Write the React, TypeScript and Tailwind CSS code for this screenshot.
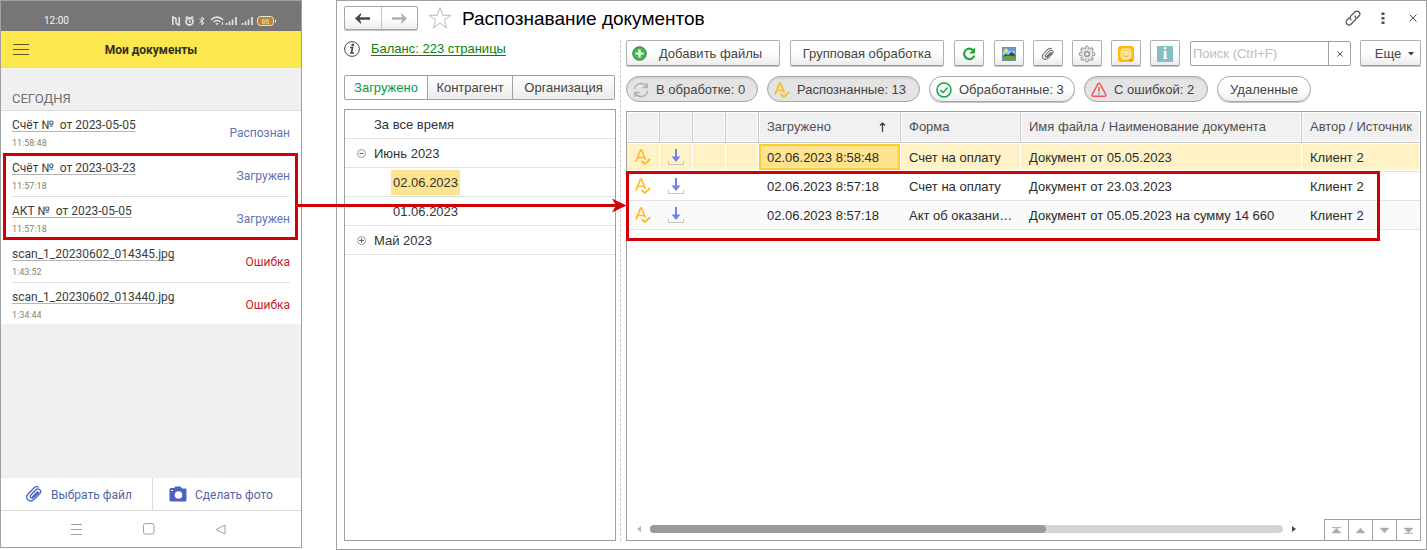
import type { ReactNode } from 'react';
import clsx from 'clsx';

const scans = [
  { title: 'Счёт №\u00a0 от 2023-05-05', time: '11:58:48', status: 'Распознан' },
  { title: 'Счёт №\u00a0 от 2023-03-23', time: '11:57:18', status: 'Загружен' },
  { title: 'АКТ №\u00a0 от 2023-05-05', time: '11:57:18', status: 'Загружен' },
  { title: 'scan_1_20230602_014345.jpg', time: '1:43:52', status: 'Ошибка' },
  { title: 'scan_1_20230602_013440.jpg', time: '1:34:44', status: 'Ошибка' },
];

const documents = [
  { date: '02.06.2023 8:58:48', form: 'Счет на оплату', name: 'Документ от 05.05.2023', author: 'Клиент 2' },
  { date: '02.06.2023 8:57:18', form: 'Счет на оплату', name: 'Документ от 23.03.2023', author: 'Клиент 2' },
  { date: '02.06.2023 8:57:18', form: 'Акт об оказани…', name: 'Документ от 05.05.2023 на сумму 14 660', author: 'Клиент 2' },
];

/* ---------- Icons ---------- */

function StatusIcons() {
  return (
    <svg width="106" height="12" viewBox="0 0 106 12" fill="none" stroke="#e4e4e4">
      {/* nfc */}
      <path d="M1.800 10V2L5 3.500V8.500M8.200 2V10L5 8.500" strokeWidth="1.500" />
      {/* alarm */}
      <circle cx="18.500" cy="6.500" r="3.500" strokeWidth="1.800" />
      <path d="M14.500 3 16.500 1.300M22.500 3 20.500 1.300M18.500 4.500V7H20" strokeWidth="1.200" />
      {/* bluetooth */}
      <path d="M28.500 4 33 8 31 10V2L33 4 28.500 8" />
      {/* wifi */}
      <path d="M40 4.800Q46 -.5 52 4.800M42.500 7Q46 4 49.500 7M45 9.300Q46 8.300 47 9.300" strokeWidth="1.600" />
      <path d="M51.500 7V10" />
      {/* signal */}
      <path d="M55.500 10V8M58.500 10V6.500M61.500 10V4.500M65 10V2M71.500 10V8M74.500 10V6.500M77.500 10V4.500M81 10V2" strokeWidth="1.700" />
      {/* battery */}
      <rect x="86.500" y="1.500" width="16" height="9" rx="3" fill="#b98534" />
      <path d="M104.500 4.500V7.500" />
      <text x="94.500" y="8.700" fontSize="7" fontFamily="Roboto" fill="#f5e6c8" stroke="none" textAnchor="middle">
        86
      </text>
    </svg>
  );
}

function Paperclip({ className, width = 1.5 }: { className: string; width?: number }) {
  return (
    <svg className={className} viewBox="0 0 18 18" fill="none" stroke="currentColor" strokeWidth={width} strokeLinecap="round">
      <path d="M13.500 7.500 8.200 12.800C6.800 14.200 4.200 12 5.700 10.300L11 4.800C13.300 2.500 17.300 5.600 14.800 8.500L8.700 14.700C5 18 -.7 13.500 2.800 9.300L9.200 2.800C10.600 1.500 12.200 1.500 13.300 2M7.500 12 12.500 6.800" />
    </svg>
  );
}

function Camera() {
  return (
    <svg width="18" height="16" viewBox="0 0 18 16">
      <path d="M2 2H5L6.500.5H11.500L13 2.500H16.500Q17.500 2.500 17.500 3.500V14Q17.500 15.500 16 15.500H2Q.5 15.500.5 14V4Q.5 2 2 2Z" fill="#4b62bf" />
      <circle cx="9.500" cy="9" r="3.800" fill="#fff" />
      <path d="M2 4.500H4" stroke="#fff" />
    </svg>
  );
}

function Recognized() {
  return (
    <svg width="16" height="16" viewBox="0 0 16 16" fill="none" stroke="#fcbb2c" strokeWidth="1.700">
      <path d="M1 12.500 5.500 1H6.500L10.500 11M2.800 8.500H9.300" />
      <path d="M6.500 12 9.800 15 15.300 10" strokeWidth="1.800" />
    </svg>
  );
}

function Download() {
  return (
    <svg width="16" height="16" viewBox="0 0 16 16" fill="none">
      <path d="M.5 12V15.500H15.500V12" stroke="#c2c2c2" />
      <path d="M8 0V9" stroke="#6f83ea" strokeWidth="2" />
      <path d="M3.500 7.500H12.500L8 13Z" fill="#6f83ea" />
    </svg>
  );
}

function Syncing() {
  return (
    <svg width="16" height="16" viewBox="0 0 16 16" fill="none" stroke="#b0b0b0" strokeWidth="1.500">
      <path d="M1.500 7C2 3.500 5 1.500 8 1.500 10.500 1.500 12.500 2.800 13.800 5M14 1V5.500H9.500M14.500 9C14 12.500 11 14.500 8 14.500 5.500 14.500 3.500 13.200 2.200 11M2 15V10.500H6.500" />
    </svg>
  );
}

function Done() {
  return (
    <svg width="16" height="16" viewBox="0 0 16 16" fill="none" stroke="#14a83c" strokeWidth="1.500">
      <circle cx="8" cy="8" r="7" />
      <path d="M4.500 8 7 10.500 11.500 5.800" />
    </svg>
  );
}

function Warning() {
  return (
    <svg width="16" height="16" viewBox="0 0 16 16" fill="none" stroke="#f4545a" strokeWidth="1.500">
      <path d="M6.700 2.300Q8 .3 9.300 2.300L14.800 12.500Q15.300 14.200 13.500 14.200H2.500Q.7 14.200 1.200 12.500Z" />
      <path d="M8 5V9.500M8 10.800V12.300" />
    </svg>
  );
}

function Plus() {
  return (
    <svg width="15" height="15" viewBox="0 0 15 15">
      <circle cx="7.500" cy="7.500" r="6.800" fill="#45b649" stroke="#1f8e2c" />
      <path d="M7.500 3.500V11.500M3.500 7.500H11.500" stroke="#fff" strokeWidth="2.200" />
    </svg>
  );
}

function Refresh() {
  return (
    <svg width="16" height="16" viewBox="0 0 16 16" fill="none">
      <path d="M11.800 4A5.200 5.200 0 1 0 13.300 9.500" stroke="#22a33a" strokeWidth="2.200" />
      <path d="M14 1.500V7.500H8Z" fill="#22a33a" />
    </svg>
  );
}

function Picture() {
  return (
    <svg width="14" height="14" viewBox="0 0 14 14">
      <rect x=".5" y=".5" width="13" height="13" fill="#a9cbea" stroke="#7d8a9c" />
      <path d="M1 1H13V4H1Z" fill="#6b9dcc" />
      <path d="M1 9 4 6.500 6 8 9.500 4.500 13 7.500V10H1Z" fill="#34506e" />
      <path d="M1 9.500Q7 8 13 9.500V13H1Z" fill="#65a832" />
      <path d="M4 1.500V5M2.300 3.300H5.700" stroke="#ffef3e" strokeWidth="1.500" />
    </svg>
  );
}

function Gear() {
  const teeth = [0, 45, 90, 135, 180, 225, 270, 315];
  return (
    <svg width="18" height="18" viewBox="0 0 18 18" fill="#dfe3e6" stroke="#8a949b">
      {teeth.map((angle) => (
        <circle key={angle} cx="9" cy="2.800" r="1.700" transform={`rotate(${angle} 9 9)`} />
      ))}
      <circle cx="9" cy="9" r="5.600" stroke="none" />
      <circle cx="9" cy="9" r="2.300" fill="#fff" strokeWidth="1.400" />
    </svg>
  );
}

function Robot() {
  return (
    <svg width="16" height="16" viewBox="0 0 16 16">
      <rect width="16" height="16" rx="2.500" fill="#ffb90f" />
      <path d="M4 2.500H12L13.500 5V11L12 13.500H4L2.500 11V5Z" fill="#ffe7a6" />
      <circle cx="8" cy="7.500" r="3.500" fill="none" stroke="#f6c55d" />
      <path d="M6 7.500H7M9 7.500H10M6.500 10H9.500" stroke="#efbd55" />
      <path d="M11 14H14" stroke="#d76c0c" />
    </svg>
  );
}

function Arrow({ left, className }: { left?: boolean; className: string }) {
  return (
    <svg width="15" height="11" viewBox="0 0 15 11" className={className} fill="currentColor">
      {left ? <path d="M0 5.500 6 0V2L4.500 4.300H15V6.700H4.500L6 9V11Z" /> : <path d="M15 5.500 9 0V2L10.500 4.300H0V6.700H10.500L9 9V11Z" />}
    </svg>
  );
}

function Star() {
  return (
    <svg width="24" height="24" viewBox="0 0 24 24" fill="#fff" stroke="#b4bac0">
      <path d="M12 1.500 14.700 9.300H22.800L16.300 14.100 18.800 22 12 17.200 5.200 22 7.700 14.100 1.200 9.300H9.300Z" />
    </svg>
  );
}

function Info() {
  return (
    <svg width="16" height="16" viewBox="0 0 16 16" fill="none" stroke="#4a4a4a">
      <circle cx="8" cy="8" r="7.400" />
      <path d="M6 6.500H8.500L7.500 12M6 12H10" strokeWidth="1.700" />
      <circle cx="8.700" cy="3.900" r="1.300" fill="#4a4a4a" stroke="none" />
    </svg>
  );
}

function Link() {
  return (
    <svg width="16" height="16" viewBox="0 0 16 16" fill="none" stroke="#4f4f4f" strokeWidth="1.200" strokeLinecap="round">
      <path d="M6 9.800C4.800 8.300 5 6.800 6 5.800L9.800 2C11 .8 12.800.8 14 2S15.200 4.800 14 6L12 8" />
      <path d="M10 6.200C11.200 7.700 11 9.200 10 10.200L6.200 14C5 15.200 3.200 15.200 2 14S.8 11.200 2 10L4 8" />
    </svg>
  );
}

function Toggle({ open }: { open: boolean }) {
  return (
    <svg width="9" height="9" viewBox="0 0 9 9" fill="none" stroke="#9a9a9a">
      <circle cx="4.500" cy="4.500" r="4" />
      <path d={open ? 'M2.500 4.500H6.500' : 'M2 4.500H7M4.500 2V7'} stroke="#666" />
    </svg>
  );
}

/* ---------- Phone ---------- */

function Phone() {
  return (
    <section className="flex w-[302px] shrink-0 flex-col border border-[#a0a0a0] font-['Roboto',sans-serif] text-xs">
      <div className="flex h-[30px] items-end justify-between bg-[#767676] pr-6 pb-0.5 pl-[43px] text-[10px] leading-4 text-[#f4f4f4]">
        <span>12:00</span>
        <span className="flex h-4 items-center">
          <StatusIcons />
        </span>
      </div>
      <header className="flex h-[37px] items-center border-b border-[#d8d8d8] bg-[#fde74f] px-3">
        <button aria-label="Меню" className="text-[#5c5426]">
          <svg width="16" height="11" viewBox="0 0 16 11" stroke="currentColor">
            <path d="M0 .5H16M0 5.500H16M0 10.500H16" />
          </svg>
        </button>
        <h2 className="flex-1 pt-0.5 pr-4 text-center font-bold text-[#33301c]">Мои документы</h2>
      </header>
      <h3 className="flex h-[43px] items-end border-b border-[#dcdcdc] bg-[#f0f0f0] px-[11px] pb-px text-[13px] leading-5 text-[#6f6f6f]">
        СЕГОДНЯ
      </h3>

      <div className="relative">
        <ul className="bg-white px-[11px]">
          {scans.map((scan, i) => (
            <li
              key={i}
              className="flex h-[43px] items-center justify-between border-b border-[#e0e0e0] pt-0.5 last:h-[41px] last:border-0"
            >
              <div>
                <a href="#" className="block leading-4 text-[#3c3c3c] underline decoration-[#b5b5b5] underline-offset-2">
                  {scan.title}
                </a>
                <span className="mt-1 block text-[9px] leading-3 text-[#86846a]">{scan.time}</span>
              </div>
              <span className={scan.status === 'Ошибка' ? 'text-[#c9202b]' : 'text-[#5f72b5]'}>{scan.status}</span>
            </li>
          ))}
        </ul>
        <div className="pointer-events-none absolute top-[42px] right-[3px] left-0.5 h-[87px] border-3 border-[#d00005]" />
      </div>

      <div className="flex-1 bg-[#f0f0f0]" />
      <div className="grid h-8 grid-cols-[152px_1fr] text-[#5466a8]">
        <button className="flex items-center gap-2 border-r border-[#dcdcdc] pl-6">
          <Paperclip className="size-[18px] text-[#4b62bf]" width={1.3} />
          <span className="pt-0.5">Выбрать файл</span>
        </button>
        <button className="flex items-center gap-2 pl-4">
          <Camera />
          <span className="pt-0.5">Сделать фото</span>
        </button>
      </div>
      <div className="flex h-[37px] items-center justify-between border-t border-[#dcdcdc] pr-[75px] pl-[70px] text-[#a0a0a0]">
        <svg width="11" height="11" viewBox="0 0 11 11" stroke="currentColor">
          <path d="M0 .5H11M0 5.500H11M0 10.500H11" />
        </svg>
        <svg width="12" height="12" viewBox="0 0 12 12" fill="none" stroke="currentColor">
          <rect x=".5" y=".5" width="10.500" height="10.500" rx="2" />
        </svg>
        <svg width="11" height="11" viewBox="0 0 11 11" fill="none" stroke="currentColor">
          <path d="M10 1V10L1 5.500Z" />
        </svg>
      </div>
    </section>
  );
}

/* ---------- Desktop window ---------- */

function Button({ className, label, children }: { className?: string; label?: string; children: ReactNode }) {
  return (
    <button
      aria-label={label}
      className={clsx(
        'flex h-[26px] shrink-0 items-center justify-center rounded-xs border border-[#b0b0b0] border-b-[#999] bg-linear-to-b from-white from-50% to-[#ececec] pt-px shadow-[0_1px_0_#c8c8c8]',
        className,
      )}
    >
      {children}
    </button>
  );
}

function Pill({ pressed, className, icon, children }: { pressed?: boolean; className: string; icon?: ReactNode; children: ReactNode }) {
  return (
    <button
      aria-pressed={pressed}
      className={clsx(
        'flex h-[26px] shrink-0 items-center gap-[7px] rounded-full border border-[#a6a6a6] pt-px',
        pressed ? 'bg-[#e4e4e4] shadow-[inset_0_2px_1px_#d4d4d4]' : 'bg-linear-to-b from-white from-50% to-[#efefef] shadow-[0_1px_0_#c4c4c4]',
        className,
      )}
    >
      {icon}
      {children}
    </button>
  );
}

function TreeRow({ children, className }: { children: ReactNode; className?: string }) {
  return <li className={clsx('flex h-[29px] items-center border-b border-[#e2e2e2] text-[#333]', className)}>{children}</li>;
}

function Sidebar() {
  return (
    <aside className="flex w-[272px] shrink-0 flex-col">
      <div className="flex h-5 items-center gap-[11px]">
        <Info />
        <a href="#" className="text-[#0a820a] underline underline-offset-2">
          Баланс: 223 страницы
        </a>
      </div>
      <div className="mt-4 mr-px flex h-[25px] divide-x divide-[#a0a0a0] rounded-xs border border-[#a0a0a0]">
        <button className="w-[83px] rounded-l-xs text-[#0b9a46]">Загружено</button>
        <button className="w-[85px] bg-linear-to-b from-white to-[#ececec]">Контрагент</button>
        <button className="flex-1 rounded-r-xs bg-linear-to-b from-white to-[#ececec]">Организация</button>
      </div>
      <ul className="mt-[9px] flex-1 border border-[#a0a0a0] bg-white">
        <TreeRow className="pt-0.5 pl-[29px]">За все время</TreeRow>
        <TreeRow className="gap-2 pt-px pl-3">
          <Toggle open />
          Июнь 2023
        </TreeRow>
        <TreeRow className="pt-px pl-[46px]">
          <span className="bg-[#fee48f] px-0.5 py-[3px]">02.06.2023</span>
        </TreeRow>
        <TreeRow className="pt-0.5 pl-12">01.06.2023</TreeRow>
        <TreeRow className="gap-2 pt-px pl-3">
          <Toggle open={false} />
          Май 2023
        </TreeRow>
      </ul>
    </aside>
  );
}

function Toolbar() {
  return (
    <div className="flex gap-[9px]">
      <Button className="mr-px w-[154px] gap-3 pr-3">
        <Plus />
        Добавить файлы
      </Button>
      <Button className="mr-px w-[154px]">Групповая обработка</Button>
      <Button className="mr-px w-[30px]" label="Обновить">
        <Refresh />
      </Button>
      <Button className="w-[30px]" label="Изображение">
        <Picture />
      </Button>
      <Button className="w-[30px]" label="Прикрепить">
        <Paperclip className="size-[14px] text-[#6a6a6a]" width={1.3} />
      </Button>
      <Button className="w-[30px]" label="Настройки">
        <Gear />
      </Button>
      <Button className="w-[30px]" label="Помощник">
        <Robot />
      </Button>
      <Button className="mr-px w-[30px]" label="Информация">
        <span className="size-4 bg-[#84bfc4] text-center font-['Liberation_Serif',serif] text-base leading-4 font-bold text-white">i</span>
      </Button>
      <div className="mt-px flex h-[25px] min-w-0 flex-1 rounded-xs border border-[#a0a0a0]">
        <input
          type="text"
          aria-label="Поиск"
          placeholder="Поиск (Ctrl+F)"
          className="min-w-0 flex-1 px-0.5 outline-none placeholder:text-[#bdbdbd]"
        />
        <button aria-label="Очистить" className="flex w-[22px] items-center justify-center border-l border-[#a0a0a0]">
          <svg width="6" height="6" viewBox="0 0 6 6" stroke="#555">
            <path d="M.5.5 5.500 5.500M5.500.5.5 5.500" />
          </svg>
        </button>
      </div>
      <Button className="w-[61px] gap-[7px] pl-2">
        Еще
        <svg width="6" height="4" viewBox="0 0 6 4" fill="#444">
          <path d="M0 0H6L3 3.500Z" />
        </svg>
      </Button>
    </div>
  );
}

const columns = [
  { title: '', width: 'w-[33px]' },
  { title: '', width: 'w-[33px]' },
  { title: '', width: 'w-[33px]' },
  { title: '', width: 'w-[33px]' },
  { title: 'Загружено', width: 'w-[142px]' },
  { title: 'Форма', width: 'w-[120px]' },
  { title: 'Имя файла / Наименование документа', width: 'w-[281px]' },
  { title: 'Автор / Источник', width: '' },
];

function DocumentsTable() {
  return (
    <table className="w-full table-fixed border-separate border-spacing-0 text-left">
      <thead>
        <tr className="h-[31px] bg-[#f1f1f1]">
          {columns.map((col, i) => (
            <th
              key={i}
              className={clsx(
                'border-r border-b border-[#c6c6c6] px-2 font-normal whitespace-nowrap text-[#4f4f4f] shadow-[inset_0_0_0_1px_#fff] last:border-r-0',
                col.width,
              )}
            >
              {col.title === 'Загружено' ? (
                <span className="flex items-center justify-between pr-1.5">
                  {col.title}
                  <svg width="7" height="10" viewBox="0 0 7 10" fill="none" stroke="#333">
                    <path d="M3.500 10V1M1 3.500 3.500 1 6 3.500" strokeWidth="1.200" />
                  </svg>
                </span>
              ) : (
                col.title
              )}
            </th>
          ))}
        </tr>
      </thead>
      <tbody className="text-[#2b2b2b]">
        {documents.map((doc, i) => (
          <tr
            key={i}
            className={clsx(
              'h-[29px] *:border-b *:border-[#e4e4e4] *:px-2',
              i === 0 && 'bg-[#fff2c6] *:shadow-[inset_-1px_0_0_#fff,inset_0_1px_0_#fff,inset_0_-1px_0_#fff]',
              i === 2 && 'bg-[#fafafa]',
            )}
          >
            <td>
              <Recognized />
            </td>
            <td>
              <Download />
            </td>
            <td />
            <td />
            <td className="relative pt-0.5">
              {i === 0 && <span className="absolute inset-x-0 inset-y-px mr-px border-2 border-[#fdcb32] bg-[#fee48f]" />}
              <span className="relative whitespace-nowrap">{doc.date}</span>
            </td>
            <td className="pt-0.5 whitespace-nowrap">{doc.form}</td>
            <td className="pt-0.5 whitespace-nowrap">{doc.name}</td>
            <td className="pt-0.5 whitespace-nowrap">{doc.author}</td>
          </tr>
        ))}
      </tbody>
    </table>
  );
}

function TableFooter() {
  const pagers = [
    { label: 'В начало', d: 'M0 0H9V.8H0ZM4.500 1 9 6H0Z' },
    { label: 'Вверх', d: 'M4.500 1 9 6H0Z' },
    { label: 'Вниз', d: 'M0 1H9L4.500 6Z' },
    { label: 'В конец', d: 'M0 6.200H9V7H0ZM0 1H9L4.500 6Z' },
  ];

  return (
    <div className="mt-auto flex h-[21px] items-stretch">
      <div className="mr-7 ml-2.5 flex flex-1 items-center gap-[9px] pb-px">
        <svg width="4" height="6" viewBox="0 0 4 6" fill="#b5b5b5">
          <path d="M4 0V6L0 3Z" />
        </svg>
        <div className="h-2 flex-1 rounded-full bg-[#d4d4d4]">
          <div className="h-2 w-5/8 rounded-full bg-[#9a9a9a]" />
        </div>
        <svg width="4" height="6" viewBox="0 0 4 6" fill="#444">
          <path d="M0 0V6L4 3Z" />
        </svg>
      </div>
      <div className="flex divide-x divide-[#a0a0a0] border-t border-l border-[#a0a0a0]">
        {pagers.map((pager) => (
          <button key={pager.label} aria-label={pager.label} className="flex w-6 items-center justify-center last:w-[23px]">
            <svg width="9" height="7" viewBox="0 0 9 7" fill="#ababab" stroke="#ababab" strokeWidth=".4">
              <path d={pager.d} />
            </svg>
          </button>
        ))}
      </div>
    </div>
  );
}

function DesktopWindow() {
  return (
    <main className="flex min-w-0 flex-1 flex-col border border-[#a0a0a0] pr-[5px] pb-2 pl-[7px] font-['Liberation_Sans',sans-serif] text-[13px] text-[#444]">
      <div className="flex h-[38px] items-center pb-1">
        <div className="flex h-6 w-[74px] divide-x divide-[#c4c4c4] rounded-xs border border-[#a6a6a6] bg-linear-to-b from-white from-50% to-[#ececec] shadow-[0_1px_0_#c4c4c4]">
          <button aria-label="Назад" className="flex flex-1 items-center justify-center">
            <Arrow left className="text-[#444]" />
          </button>
          <button aria-label="Вперед" className="flex flex-1 items-center justify-center">
            <Arrow className="text-[#b0b0b0]" />
          </button>
        </div>
        <button aria-label="В избранное" className="mx-2.5">
          <Star />
        </button>
        <h1 className="flex-1 pt-0.5 text-[19px] text-black">Распознавание документов</h1>
        <button aria-label="Ссылка">
          <Link />
        </button>
        <button aria-label="Меню окна" className="mx-5">
          <svg width="4" height="12" viewBox="0 0 4 12" fill="#4f4f4f">
            <path d="M.5.5H3.500V3H.5ZM.5 5H3.500V7.500H.5ZM.5 9.500H3.500V12H.5Z" />
          </svg>
        </button>
        <button aria-label="Закрыть" className="mx-1">
          <svg width="8" height="8" viewBox="0 0 8 8" stroke="#4f4f4f">
            <path d="M.5.5 7.500 7.500M7.500.5.5 7.500" />
          </svg>
        </button>
      </div>

      <div className="flex flex-1">
        <Sidebar />
        <div className="mx-1 mt-px w-px border-l border-dashed border-[#c8c8c8]" />
        <div className="flex min-w-0 flex-1 flex-col pt-px pl-px">
          <Toolbar />
          <div className="mt-2.5 flex gap-[9px]">
            <Pill pressed icon={<Syncing />} className="w-[132px] pl-1.5">
              В обработке: 0
            </Pill>
            <Pill pressed icon={<Recognized />} className="w-[153px] pl-1.5">
              Распознанные: 13
            </Pill>
            <Pill icon={<Done />} className="w-[146px] pl-1.5">
              Обработанные: 3
            </Pill>
            <Pill pressed icon={<Warning />} className="w-[124px] pl-1.5">
              С ошибкой: 2
            </Pill>
            <Pill className="w-[94px] justify-center">Удаленные</Pill>
          </div>
          <div className="relative mt-[9px] flex flex-1 flex-col border border-[#a0a0a0] bg-white">
            <DocumentsTable />
            <TableFooter />
            <div className="pointer-events-none absolute top-[59px] right-10 -left-px h-[70px] border-3 border-[#d00005]" />
          </div>
        </div>
      </div>
    </main>
  );
}

export default function App() {
  return (
    <div className="relative flex min-h-screen gap-[34px] bg-white">
      <div className="mb-0.5 flex">
        <Phone />
      </div>
      <DesktopWindow />

      {/* Arrow from the phone list to the uploaded table rows */}
      <svg className="pointer-events-none absolute top-[198px] left-[298px]" width="329" height="15" viewBox="0 0 329 15">
        <path d="M0 7.500H318" stroke="#d00005" strokeWidth="3" />
        <path d="M314 .5 328.500 7.500 314 14.500 318 7.500Z" fill="#d00005" />
      </svg>
    </div>
  );
}
